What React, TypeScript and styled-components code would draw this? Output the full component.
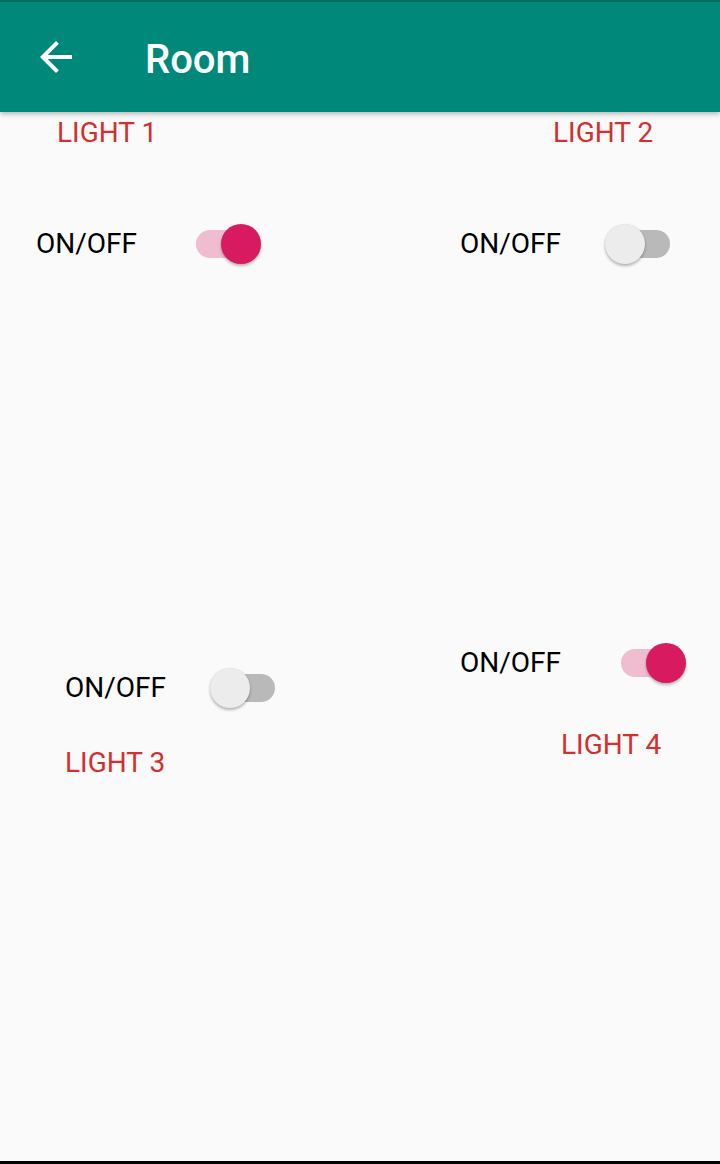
import React from "react";
import styled, { createGlobalStyle } from "styled-components";

const GlobalStyle = createGlobalStyle`
  html, body {
    margin: 0;
    padding: 0;
    background: #fafafa;
  }
  #root {
    min-height: 1164px;
    display: flex;
    flex-direction: column;
  }
`;

const Screen = styled.div`
  flex: 1;
  display: flex;
  flex-direction: column;
  background: #fafafa;
  font-family: Roboto, "Noto Sans", sans-serif;
`;

const Toolbar = styled.header`
  border-top: 2px solid #0a6b60;
  background: #00887a;
  display: flex;
  align-items: center;
  padding: 5px 0 0 32px;
  box-sizing: border-box;
  height: 112px;
  gap: 65px;
  box-shadow: 0 2px 5px rgba(0, 0, 0, 0.28);
  position: relative;
  z-index: 1;
`;

const BackButton = styled.button`
  width: 48px;
  height: 48px;
  margin-top: -5px;
  padding: 0;
  border: 0;
  background: transparent;
  display: flex;
  align-items: center;
  justify-content: center;
  color: #fff;
`;

const Title = styled.h1`
  margin: 0;
  font-family: Roboto, sans-serif;
  font-weight: 500;
  font-size: 40px;
  line-height: 48px;
  color: #ffffff;
`;

const Main = styled.main`
  flex: 1;
  display: flex;
  flex-direction: column;
`;

const Grid = styled.div`
  display: grid;
  grid-template-columns: 360px 360px;
  align-items: start;
`;

const Block = styled.section<{ $pt: number; $gap: number }>`
  display: flex;
  flex-direction: column;
  padding-top: ${(p) => p.$pt}px;
  gap: ${(p) => p.$gap}px;
`;

const LightName = styled.div<{ $inset: number }>`
  padding-left: ${(p) => p.$inset}px;
  font-family: Roboto, sans-serif;
  font-size: 28px;
  line-height: 32px;
  color: #d32f2f;
`;

const SwitchRow = styled.label<{ $inset: number; $gap: number }>`
  display: flex;
  align-items: center;
  height: 40px;
  padding-left: ${(p) => p.$inset}px;
  gap: ${(p) => p.$gap}px;
`;

const SwitchText = styled.span`
  font-family: Roboto, sans-serif;
  font-size: 28px;
  line-height: 32px;
  color: #000;
`;

const SwitchBox = styled.span`
  position: relative;
  width: 72px;
  height: 40px;
  flex: none;
`;

const Track = styled.span<{ $on: boolean }>`
  position: absolute;
  left: 7px;
  top: 6px;
  width: 58px;
  height: 28px;
  border-radius: 14px;
  background: ${(p) => (p.$on ? "#f0bdd0" : "#b9b9b9")};
`;

const Thumb = styled.span<{ $on: boolean }>`
  position: absolute;
  top: 0;
  left: ${(p) => (p.$on ? 32 : 0)}px;
  width: 40px;
  height: 40px;
  border-radius: 50%;
  background: ${(p) => (p.$on ? "#d81b60" : "#ececec")};
  box-shadow: 0 2px 3px rgba(0, 0, 0, 0.28), 0 0 1px rgba(0, 0, 0, 0.12);
`;

const NavBar = styled.div`
  height: 3px;
  background: #000;
`;

function Switch({ on }: { on: boolean }) {
  return (
    <SwitchBox role="switch" aria-checked={on}>
      <Track $on={on} />
      <Thumb $on={on} />
    </SwitchBox>
  );
}

function BackArrow() {
  return (
    <svg width="48" height="48" viewBox="0 0 24 24" fill="#ffffff">
      <path d="M20 11H7.83l5.59-5.59L12 4l-8 8 8 8 1.41-1.41L7.83 13H20v-2z" />
    </svg>
  );
}

export default function App() {
  return (
    <>
      <GlobalStyle />
      <Screen>
        <Toolbar>
          <BackButton aria-label="Back">
            <BackArrow />
          </BackButton>
          <Title>Room</Title>
        </Toolbar>
        <Main>
          <Grid>
            <Block $pt={5} $gap={75}>
              <LightName $inset={57}>LIGHT 1</LightName>
              <SwitchRow $inset={36} $gap={52}>
                <SwitchText>ON/OFF</SwitchText>
                <Switch on={true} />
              </SwitchRow>
            </Block>
            <Block $pt={5} $gap={75}>
              <LightName $inset={193}>LIGHT 2</LightName>
              <SwitchRow $inset={100} $gap={44}>
                <SwitchText>ON/OFF</SwitchText>
                <Switch on={false} />
              </SwitchRow>
            </Block>
          </Grid>
          <Grid>
            <Block $pt={404} $gap={39}>
              <SwitchRow $inset={65} $gap={44}>
                <SwitchText>ON/OFF</SwitchText>
                <Switch on={false} />
              </SwitchRow>
              <LightName $inset={65}>LIGHT 3</LightName>
            </Block>
            <Block $pt={379} $gap={46}>
              <SwitchRow $inset={100} $gap={53}>
                <SwitchText>ON/OFF</SwitchText>
                <Switch on={true} />
              </SwitchRow>
              <LightName $inset={201}>LIGHT 4</LightName>
            </Block>
          </Grid>
        </Main>
        <NavBar />
      </Screen>
    </>
  );
}
